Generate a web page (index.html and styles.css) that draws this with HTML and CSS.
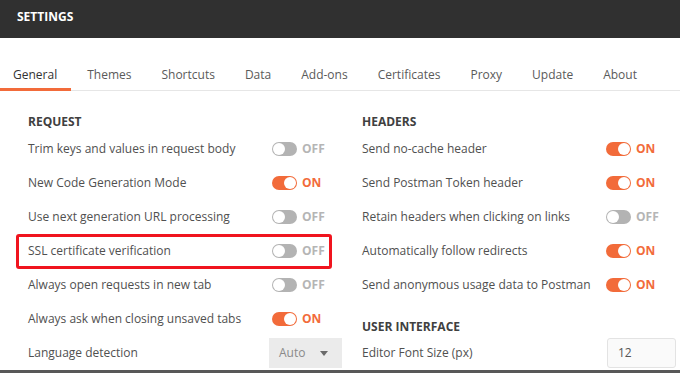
FILE: index.html
```html
<!DOCTYPE html>
<html>
<head>
<meta charset="utf-8">
<link rel="stylesheet" href="styles.css">
</head>
<body>
<div class="app">
  <header class="topbar"><span class="title">SETTINGS</span></header>
  <nav class="tabs">
    <div class="tab active">General</div>
    <div class="tab">Themes</div>
    <div class="tab">Shortcuts</div>
    <div class="tab">Data</div>
    <div class="tab">Add-ons</div>
    <div class="tab">Certificates</div>
    <div class="tab">Proxy</div>
    <div class="tab">Update</div>
    <div class="tab">About</div>
  </nav>
  <main class="content">
    <section class="col">
      <h2 class="heading">REQUEST</h2>
      <div class="row"><span class="label">Trim keys and values in request body</span><span class="ctrl"><span class="toggle"></span><span class="state">OFF</span></span></div>
      <div class="row"><span class="label">New Code Generation Mode</span><span class="ctrl"><span class="toggle on"></span><span class="state on">ON</span></span></div>
      <div class="row"><span class="label">Use next generation URL processing</span><span class="ctrl"><span class="toggle"></span><span class="state">OFF</span></span></div>
      <div class="row marked"><span class="label">SSL certificate verification</span><span class="ctrl"><span class="toggle"></span><span class="state">OFF</span></span></div>
      <div class="row"><span class="label">Always open requests in new tab</span><span class="ctrl"><span class="toggle"></span><span class="state">OFF</span></span></div>
      <div class="row"><span class="label">Always ask when closing unsaved tabs</span><span class="ctrl"><span class="toggle on"></span><span class="state on">ON</span></span></div>
      <div class="row"><span class="label">Language detection</span><span class="select">Auto<span class="caret"></span></span></div>
    </section>
    <section class="col">
      <h2 class="heading">HEADERS</h2>
      <div class="row"><span class="label">Send no-cache header</span><span class="ctrl"><span class="toggle on"></span><span class="state on">ON</span></span></div>
      <div class="row"><span class="label">Send Postman Token header</span><span class="ctrl"><span class="toggle on"></span><span class="state on">ON</span></span></div>
      <div class="row"><span class="label">Retain headers when clicking on links</span><span class="ctrl"><span class="toggle"></span><span class="state">OFF</span></span></div>
      <div class="row"><span class="label">Automatically follow redirects</span><span class="ctrl"><span class="toggle on"></span><span class="state on">ON</span></span></div>
      <div class="row"><span class="label">Send anonymous usage data to Postman</span><span class="ctrl"><span class="toggle on"></span><span class="state on">ON</span></span></div>
      <h2 class="heading second">USER INTERFACE</h2>
      <div class="row"><span class="label">Editor Font Size (px)</span><span class="input">12</span></div>
    </section>
  </main>
  <div class="bottombar"></div>
</div>
</body>
</html>
```
FILE: styles.css
```css
* { box-sizing: border-box; }
html, body { margin: 0; padding: 0; }
body {
  font-family: "Open Sans", "Liberation Sans", sans-serif;
  font-size: 12px;
  color: #505050;
  background: #fff;
}
.app {
  height: 373px;
  display: flex;
  flex-direction: column;
  overflow: hidden;
}
.topbar {
  height: 38px;
  background: #303030;
  padding: 9px 0 0 17px;
  flex: none;
}
.title {
  display: block;
  color: #fff;
  font-weight: 700;
  font-size: 12px;
  line-height: 16px;
}
.tabs {
  flex: none;
  display: flex;
  height: 53px;
  border-bottom: 1px solid #e6e6e6;
}
.tab {
  height: 53px;
  margin-bottom: -1px;
  padding: 0 14px 5px 13px;
  margin-right: 3px;
  display: flex;
  align-items: flex-end;
  line-height: 16px;
  color: #5a5a5a;
  border-bottom: 3px solid transparent;
  white-space: nowrap;
}
.tab.active {
  color: #333;
  border-bottom-color: #f26b3a;
}
.content {
  flex: 1;
  min-height: 0;
  display: grid;
  grid-template-columns: 306px 306px;
  column-gap: 28px;
  padding: 23px 0 0 28px;
}
.col { display: flex; flex-direction: column; }
.heading {
  margin: 0 0 2px;
  font-size: 12px;
  line-height: 16px;
  font-weight: 700;
  color: #404040;
}
.heading.second { margin-top: 17px; margin-bottom: 1px; }
.row {
  position: relative;
  height: 34px;
  flex: none;
  display: flex;
  align-items: center;
  line-height: 16px;
}
.label { flex: 1; white-space: nowrap; }
.ctrl {
  width: 62px;
  display: flex;
  align-items: center;
}
.toggle {
  position: relative;
  width: 25px;
  height: 14px;
  border-radius: 7px;
  background: #b3b3b3;
  flex: none;
}
.toggle::after {
  content: "";
  position: absolute;
  top: 1px;
  left: 1px;
  width: 12px;
  height: 12px;
  border-radius: 50%;
  background: #fff;
}
.toggle.on { background: #f26b3a; }
.toggle.on::after { left: 12px; }
.state {
  margin-left: 5px;
  font-weight: 700;
  color: #b5b5b5;
}
.state.on { color: #f26b3a; }
.marked::before {
  content: "";
  position: absolute;
  left: -12px;
  right: 2px;
  top: 0;
  bottom: -1px;
  border: 3px solid #f0141e;
  border-radius: 3px;
}
.select {
  width: 73px;
  height: 30px;
  margin-right: -8px;
  background: #ebebeb;
  color: #8a8a8a;
  display: flex;
  align-items: center;
  padding-left: 10px;
  position: relative;
}
.caret {
  position: absolute;
  left: 51px;
  top: 13px;
  width: 0;
  height: 0;
  border-left: 4px solid transparent;
  border-right: 4px solid transparent;
  border-top: 5px solid #6a6a6a;
}
.input {
  width: 69px;
  height: 30px;
  margin-right: -8px;
  border: 1px solid #e3e3e3;
  border-radius: 3px;
  background: #fafafa;
  color: #555;
  display: flex;
  align-items: center;
  padding-left: 10px;
}
.bottombar {
  flex: none;
  height: 3px;
  background: #585858;
  position: relative;
}
```
